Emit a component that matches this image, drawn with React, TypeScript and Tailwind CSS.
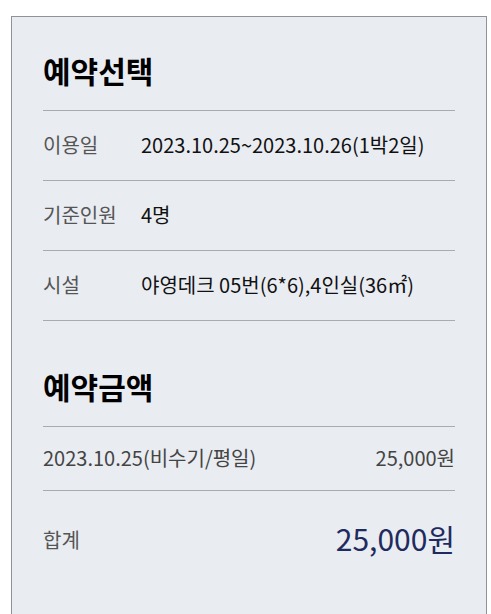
import React from "react";

const font = { fontFamily: '"Noto Sans CJK KR", "Noto Sans", sans-serif' };

function InfoRow({ label, value }: { label: string; value: string }) {
  return (
    <div className="flex h-[70px] items-center border-b border-[#a9abae] pb-[2px]">
      <div className="w-[98px] shrink-0 text-[20px] text-[#555555]">{label}</div>
      <div className="text-[20px] text-[#111111]">{value}</div>
    </div>
  );
}

export default function App() {
  return (
    <div className="bg-white pt-4 pl-[11px]" style={font}>
      <div className="w-[476px] min-h-[620px] border border-[#8f9296] bg-[#e9ecf1] px-[31px] pt-[33px] pb-10">
        <h2 className="border-b border-[#a9abae] pb-5 text-[30px] font-bold leading-[40px] text-black">
          예약선택
        </h2>
        <InfoRow label="이용일" value="2023.10.25~2023.10.26(1박2일)" />
        <InfoRow label="기준인원" value="4명" />
        <InfoRow label="시설" value="야영데크 05번(6*6),4인실(36㎡)" />

        <h2 className="mt-[45px] border-b border-[#a9abae] pb-5 text-[30px] font-bold leading-[40px] text-black">
          예약금액
        </h2>
        <div className="flex h-[64px] items-center justify-between border-b border-[#a9abae] pb-[2px] text-[20px] text-[#444444]">
          <span>2023.10.25(비수기/평일)</span>
          <span>25,000원</span>
        </div>
        <div className="flex h-[98px] items-center justify-between">
          <span className="text-[20px] text-[#555555]">합계</span>
          <span className="text-[30px] text-[#1f2a5e] pb-[3px]">25,000원</span>
        </div>
      </div>
    </div>
  );
}
